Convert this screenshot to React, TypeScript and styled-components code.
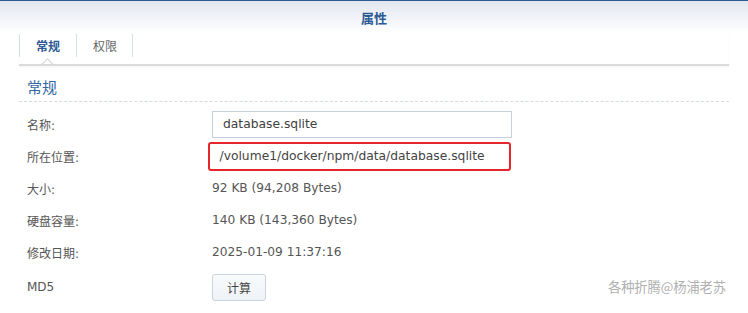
import React from 'react';
import styled, { createGlobalStyle } from 'styled-components';

type Row = {
  label: string;
  value: string;
  kind: 'input' | 'highlight' | 'text' | 'button';
};

const rows: Row[] = [
  { label: '名称:', value: 'database.sqlite', kind: 'input' },
  { label: '所在位置:', value: '/volume1/docker/npm/data/database.sqlite', kind: 'highlight' },
  { label: '大小:', value: '92 KB (94,208 Bytes)', kind: 'text' },
  { label: '硬盘容量:', value: '140 KB (143,360 Bytes)', kind: 'text' },
  { label: '修改日期:', value: '2025-01-09 11:37:16', kind: 'text' },
  { label: 'MD5', value: '计算', kind: 'button' },
];

const GlobalStyle = createGlobalStyle`
  html, body {
    margin: 0;
    padding: 0;
    background: #fff;
  }
  body {
    font-family: "DejaVu Sans", "Noto Sans CJK SC", sans-serif;
    font-size: 12px;
    color: #555;
  }
`;

const Window = styled.div`
  position: relative;
  width: 748px;
  height: 313px;
  overflow: hidden;
  background: #fff;
`;

const Header = styled.div`
  height: 32px;
  border-top: 1px solid #2b5a96;
  background: linear-gradient(to bottom, #e2e7ef 0%, #f3f5f9 60%, #ffffff 100%);
  display: flex;
  align-items: center;
  justify-content: center;
`;

const Title = styled.div`
  font-family: "Noto Sans CJK SC", sans-serif;
  font-size: 13px;
  font-weight: bold;
  color: #2c5a95;
`;

const Body = styled.div`
  padding: 1px 19px 0;
`;

const TabBar = styled.div`
  display: flex;
  height: 30px;
  border-bottom: 2px solid #dadada;
  box-shadow: 0 1px 2px rgba(0, 0, 0, 0.05);
  position: relative;

  &::before {
    content: '';
    position: absolute;
    left: 0;
    top: 0;
    height: 23px;
    width: 1px;
    background: #d6dee8;
  }
`;

const Tab = styled.div<{ $active?: boolean }>`
  position: relative;
  width: ${(p) => (p.$active ? 58 : 56)}px;
  height: 23px;
  display: flex;
  align-items: center;
  justify-content: center;
  font-family: "Noto Sans CJK SC", sans-serif;
  font-size: 12px;
  font-weight: ${(p) => (p.$active ? 'bold' : 'normal')};
  color: ${(p) => (p.$active ? '#2c5a95' : '#666')};

  &::after {
    content: '';
    position: absolute;
    right: 0;
    top: 0;
    bottom: 0;
    width: 1px;
    background: #d6dee8;
  }

  ${(p) =>
    p.$active &&
    `
    &::before {
      content: '';
      position: absolute;
      left: 50%;
      top: 26px;
      width: 8px;
      height: 8px;
      margin-left: -5px;
      border-top: 1px solid #cfcfcf;
      border-left: 1px solid #cfcfcf;
      transform: rotate(45deg);
    }
  `}
`;

const SectionTitle = styled.div`
  padding: 6px 0 0 8px;
  height: 29px;
  line-height: 29px;
  font-family: "Noto Sans CJK SC", sans-serif;
  font-size: 15px;
  color: #3567a5;
  border-bottom: 1px dashed #d3dbe5;
`;

const Rows = styled.div`
  padding-top: 6px;
`;

const RowLine = styled.div<{ $spaced?: boolean }>`
  display: grid;
  grid-template-columns: 193px 1fr;
  align-items: center;
  height: 32px;
  margin-top: ${(p) => (p.$spaced ? 3 : 0)}px;
`;

const Label = styled.div`
  padding-left: 8px;
  color: #555;
`;

const Input = styled.div`
  box-sizing: border-box;
  width: 300px;
  height: 27px;
  border: 1px solid #c6d1dd;
  padding-left: 10px;
  display: flex;
  align-items: center;
  font-size: 12.3px;
  color: #3f3f3f;
`;

const Highlight = styled.div`
  box-sizing: border-box;
  margin-left: -4px;
  width: 303px;
  height: 29px;
  border: 2.5px solid #e5262b;
  border-radius: 3px;
  padding-left: 9.5px;
  display: flex;
  align-items: center;
  font-size: 12.3px;
  color: #444;
`;

const Value = styled.div`
  color: #555;
  font-size: 12.2px;
`;

const Button = styled.button`
  box-sizing: border-box;
  width: 54px;
  height: 27px;
  border: 1px solid #c9d3de;
  border-radius: 3px;
  background: linear-gradient(to bottom, #f9fbfd, #eef2f7);
  font-family: "Noto Sans CJK SC", sans-serif;
  font-size: 12px;
  color: #444;
  padding: 0;
`;

const Watermark = styled.div`
  position: absolute;
  right: 22px;
  top: 277px;
  font-family: "Noto Sans CJK SC", sans-serif;
  font-size: 13.3px;
  color: #b0b0b0;
  letter-spacing: -0.1px;
`;

const renderValue = (row: Row) => {
  switch (row.kind) {
    case 'input':
      return <Input>{row.value}</Input>;
    case 'highlight':
      return <Highlight>{row.value}</Highlight>;
    case 'button':
      return (
        <div>
          <Button>{row.value}</Button>
        </div>
      );
    default:
      return <Value>{row.value}</Value>;
  }
};

const App: React.FC = () => {
  return (
    <>
      <GlobalStyle />
      <Window>
        <Header>
          <Title>属性</Title>
        </Header>
        <Body>
          <TabBar>
            <Tab $active>常规</Tab>
            <Tab>权限</Tab>
          </TabBar>
          <SectionTitle>常规</SectionTitle>
          <Rows>
            {rows.map((row, index) => (
              <RowLine key={`row-${index}`} $spaced={row.kind === 'button'}>
                <Label>{row.label}</Label>
                {renderValue(row)}
              </RowLine>
            ))}
          </Rows>
        </Body>
        <Watermark>各种折腾@杨浦老苏</Watermark>
      </Window>
    </>
  );
};

export default App;
